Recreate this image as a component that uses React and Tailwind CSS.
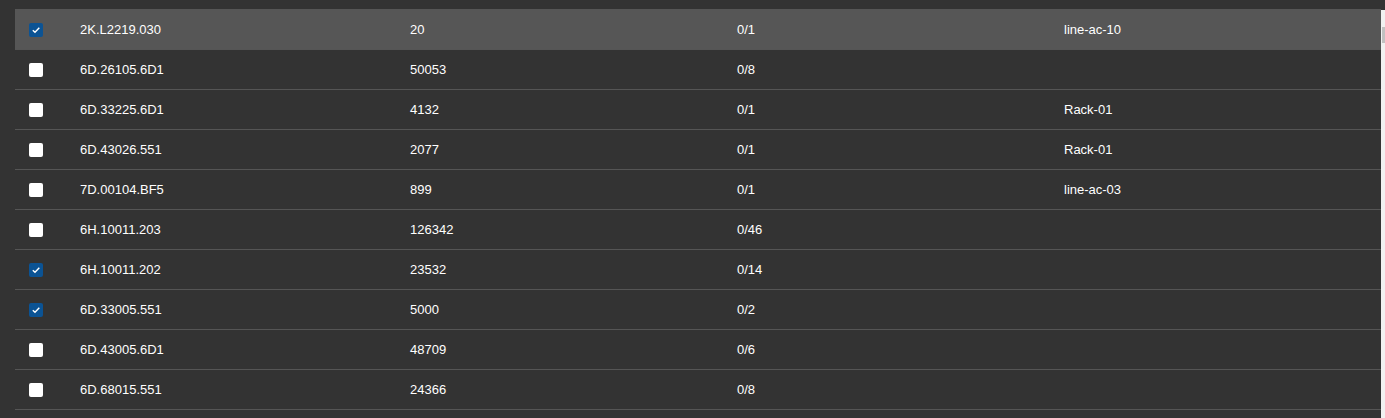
import React from "react";

const rows = [
  { id: "2K.L2219.030", qty: "20", ratio: "0/1", loc: "line-ac-10", checked: true, active: true },
  { id: "6D.26105.6D1", qty: "50053", ratio: "0/8", loc: "", checked: false },
  { id: "6D.33225.6D1", qty: "4132", ratio: "0/1", loc: "Rack-01", checked: false },
  { id: "6D.43026.551", qty: "2077", ratio: "0/1", loc: "Rack-01", checked: false },
  { id: "7D.00104.BF5", qty: "899", ratio: "0/1", loc: "line-ac-03", checked: false },
  { id: "6H.10011.203", qty: "126342", ratio: "0/46", loc: "", checked: false },
  { id: "6H.10011.202", qty: "23532", ratio: "0/14", loc: "", checked: true },
  { id: "6D.33005.551", qty: "5000", ratio: "0/2", loc: "", checked: true },
  { id: "6D.43005.6D1", qty: "48709", ratio: "0/6", loc: "", checked: false },
  { id: "6D.68015.551", qty: "24366", ratio: "0/8", loc: "", checked: false },
];

function Checkbox({ checked }) {
  if (checked) {
    return (
      <div className="w-[14px] h-[14px] rounded-[2px] bg-[#0b5394] flex items-center justify-center">
        <svg width="10" height="10" viewBox="0 0 10 10">
          <path d="M1.8 5.2 L4 7.3 L8.3 2.8" fill="none" stroke="#ffffff" strokeWidth="1.4" />
        </svg>
      </div>
    );
  }
  return <div className="w-[14px] h-[14px] rounded-[2px] bg-white" />;
}

export default function App() {
  return (
    <div
      className="w-[1385px] h-[418px] bg-[#333333] flex overflow-hidden"
      style={{ fontFamily: '"Liberation Sans", Arial, sans-serif' }}
    >
      <div className="flex-1 pt-[9px] pl-[15px]">
        <div className="border-t border-[#565656]">
          {rows.map((r) => (
            <div
              key={r.id}
              className={`grid grid-cols-[50px_330px_327px_327px_1fr] h-[40px] items-center border-b border-[#555555] text-[13px] text-white ${
                r.active ? "bg-[#565656]" : ""
              }`}
            >
              <div className="pl-[14px]">
                <Checkbox checked={r.checked} />
              </div>
              <div className="pl-[15px]">{r.id}</div>
              <div className="pl-[15px]">{r.qty}</div>
              <div className="pl-[15px]">{r.ratio}</div>
              <div className="pl-[15px]">{r.loc}</div>
            </div>
          ))}
        </div>
      </div>
      <div className="w-[4px] mt-[10px] bg-[#f1f1f1] flex flex-col">
        <div className="mt-[17px] h-[16px] w-[3px] ml-[1px] bg-[#c1c1c1]" />
      </div>
    </div>
  );
}
